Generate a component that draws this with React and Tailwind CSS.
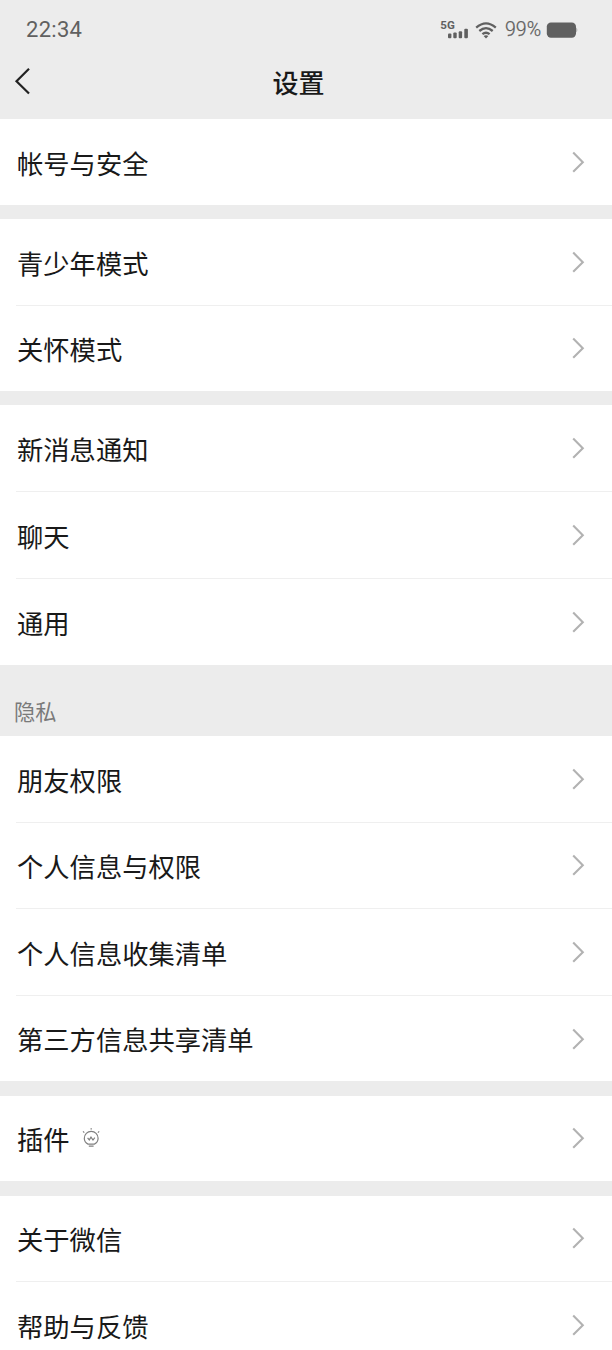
import React from 'react';

const groups = [
  { height: 'h-[86px]', gap: '', items: ['帐号与安全'] },
  { height: 'h-[172.4px]', gap: 'mt-[14px]', items: ['青少年模式', '关怀模式'] },
  { height: 'h-[259.2px]', gap: 'mt-[14.1px]', items: ['新消息通知', '聊天', '通用'] },
  { title: '隐私', height: 'h-[345.3px]', gap: '', items: ['朋友权限', '个人信息与权限', '个人信息收集清单', '第三方信息共享清单'] },
  { height: 'h-[85.7px]', gap: 'mt-[14.3px]', items: ['插件'] },
  { height: 'h-[173px]', gap: 'mt-[14.3px]', items: ['关于微信', '帮助与反馈'] },
];

function StatusBar() {
  return (
    <div className="flex h-[60px] items-center justify-between pl-[26px] pr-[34px] text-[#606060]">
      <span className="font-[Roboto,sans-serif] text-[22px] leading-none tracking-[0.3px]">22:34</span>
      <div className="flex items-center">
        <svg className="h-[24px] w-[30px]" viewBox="0 0 30 24" fill="#606060">
          <text x="0.3" y="11.2" fontSize="11.5" fontWeight="700" fontFamily="Roboto, sans-serif" textLength="14.5" lengthAdjust="spacingAndGlyphs">5G</text>
          <rect x="8" y="15.6" width="3.4" height="4.6" rx="1" />
          <rect x="13.3" y="14.6" width="3.4" height="5.6" rx="1" />
          <rect x="18.7" y="13.2" width="3.4" height="7" rx="1" />
          <rect x="24.3" y="10.8" width="3.6" height="9.4" rx="1" />
        </svg>
        <svg className="ml-[5px] h-[17px] w-[22px]" viewBox="0 0 22 17" fill="none" stroke="#606060" strokeWidth="2.3">
          <path d="M1.2 5.6Q11-2.8 20.8 5.6M4.3 9Q11 3.3 17.7 9M7.4 12.2Q11 9.2 14.6 12.2" />
          <path d="M8.6 14Q11 12.3 13.4 14L11 16.5Z" fill="#606060" stroke="none" />
        </svg>
        <span className="ml-[8px] w-[36px] whitespace-nowrap font-[Roboto,sans-serif] text-[19.5px] font-light leading-none [-webkit-text-stroke:0.25px_#606060]">99%</span>
        <svg className="ml-[5px] h-[18px] w-[32px]" viewBox="0 0 32 18" fill="#606060">
          <rect x="0.8" y="1.4" width="29.2" height="15.4" rx="4.2" />
          <path d="M30.4 6.6q1.8 2.4 0 4.8z" fill="#999" />
        </svg>
      </div>
    </div>
  );
}

function Chevron() {
  return (
    <svg className="h-[22px] w-[14px] shrink-0" viewBox="0 0 14 22" fill="none" stroke="#b2b2b2" strokeWidth="2.1">
      <path d="M2.2 1.6L11.8 11.2L2.2 20.8" />
    </svg>
  );
}

function Bulb() {
  return (
    <svg className="ml-[12px] h-[22px] w-[18px]" viewBox="0 0 18 22" fill="none" stroke="#808080" strokeWidth="1.2">
      <path d="M6 17.1C3.6 16 2.3 13.8 2.3 11.3a6.9 6.9 0 0 1 13.8 0c0 2.5-1.3 4.7-3.7 5.8ZM6.8 19.2h4.8" />
      <path d="M5.6 10.8l1.7 2.1 1.7-2.8 2 2.9 1.8-2.4" />
      <path d="M8.5 1.9h1.4M1 4.4l1.3 1.2M17.2 4.4l-1.3 1.2" />
    </svg>
  );
}

function Row({ label, last }) {
  return (
    <div className={`pl-4 ${last ? 'min-h-0 flex-1' : 'h-[86.6px] shrink-0'}`}>
      <div className={`flex h-full items-center pr-[27px] ${last ? '' : 'border-b border-[#efefef]'}`}>
        <span className="ml-px mt-[2px] text-[26.3px] leading-none">{label}</span>
        {label === '插件' && <Bulb />}
        <span className="ml-auto flex"><Chevron /></span>
      </div>
    </div>
  );
}

export default function App() {
  return (
    <div className="h-[1350px] w-full overflow-hidden bg-[#ececec] font-['Noto_Sans_CJK_SC',sans-serif] text-[#191919]">
      <StatusBar />
      <header className="grid h-[59px] grid-cols-[1fr_auto_1fr] items-start pr-[15px]">
        <svg className="ml-[14px] mt-[7px] h-[28px] w-[18px]" viewBox="0 0 18 28" fill="none" stroke="#222" strokeWidth="2.2">
          <path d="M15 1.8L2.5 14.2L15 26.5" />
        </svg>
        <h1 className="mt-[9px] text-[26px] font-medium leading-none">设置</h1>
      </header>
      {groups.map((group) => (
        <section key={group.items[0]}>
          {group.title && (
            <h2 className="flex h-[71.3px] items-end pb-[15px] pl-[14px] text-[21.2px] leading-none text-[#7a7a7a]">{group.title}</h2>
          )}
          <div className={`flex flex-col bg-white ${group.height} ${group.gap}`}>
            {group.items.map((label, i) => (
              <Row key={label} label={label} last={i === group.items.length - 1} />
            ))}
          </div>
        </section>
      ))}
    </div>
  );
}
